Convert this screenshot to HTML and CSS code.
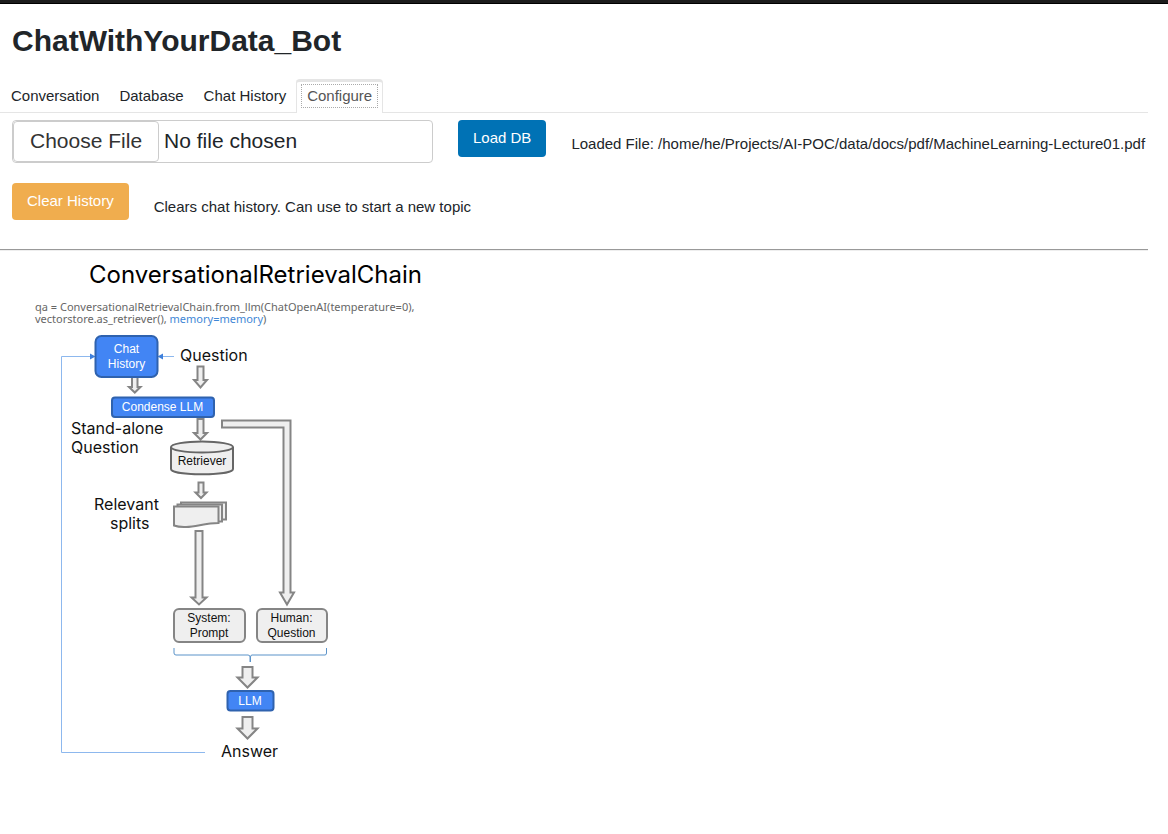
FILE: index.html
```html
<!DOCTYPE html>
<html lang="en">
<head>
<meta charset="utf-8">
<title>ChatWithYourData_Bot</title>
<link rel="stylesheet" href="styles.css">
</head>
<body>
<div class="topbar"></div>
<main class="app">
  <h1 class="title">ChatWithYourData_Bot</h1>
  <nav class="tabs" role="tablist">
    <button class="tab" type="button" role="tab">Conversation</button>
    <button class="tab" type="button" role="tab">Database</button>
    <button class="tab" type="button" role="tab">Chat History</button>
    <button class="tab tab-active" type="button" role="tab" aria-selected="true"><span class="tab-label">Configure</span></button>
  </nav>
  <section class="row row-load">
    <input class="file" type="file" aria-label="Choose File">
    <button class="btn btn-primary" type="button">Load DB</button>
    <p class="note">Loaded File: /home/he/Projects/AI-POC/data/docs/pdf/MachineLearning-Lecture01.pdf</p>
  </section>
  <section class="row">
    <button class="btn btn-warning" type="button">Clear History</button>
    <p class="note">Clears chat history. Can use to start a new topic</p>
  </section>
  <hr class="divider">
  <svg class="diagram" width="450" height="515" viewBox="0 255 450 515" role="img" aria-label="ConversationalRetrievalChain diagram">
    <text class="d-title" x="89" y="283">ConversationalRetrievalChain</text>
    <g class="d-code">
      <text x="35" y="311">qa = ConversationalRetrievalChain.from_llm(ChatOpenAI(temperature=0),</text>
      <text x="35" y="323">vectorstore.as_retriever(), <tspan class="d-memory">memory=memory</tspan>)</text>
    </g>

    <g class="d-line">
      <path d="M205 752.500H61.500V356.500H91"/>
      <path d="M174 356.500H162"/>
      <path class="d-brace" d="M174 648V653Q174 655 176 655H248Q250 655 250 657V662M250.500 662V657Q250.500 655 252 655H325Q326.500 655 326.500 653V648"/>
    </g>
    <path class="d-head" d="M90 353.500L95.500 356.500L90 359.500ZM163 353.500L157.500 356.500L163 359.500Z"/>

    <g class="d-arrow">
      <path d="M132 377H137.500V387H140.500L134.800 392.500L129 387H132Z"/>
      <path d="M197.500 366.500H203.500V380H207L200.500 387.500L194 380H197.500Z"/>
      <path d="M197.500 419H203.500V433H207L200.500 439.500L194 433H197.500Z"/>
      <path d="M198.500 482.500H203.500V492.500H206.500L201 498L195.500 492.500H198.500Z"/>
      <path d="M195.500 531H202.500V597.500H206.500L199 604.500L191.500 597.500H195.500Z"/>
      <path d="M222 420.500H290.500V592.500H294L287 604.500L280 592.500H283.500V427.500H222Z"/>
      <path d="M242.500 667H252.500V677.500H257.500L247.500 687.500L237.500 677.500H242.500Z"/>
      <path d="M242.500 717H252.500V728.500H257.500L247.500 738.500L237.500 728.500H242.500Z"/>
      <path d="M181 502.500H226V519.500H181Z"/>
      <path d="M177.500 504.500H222V521.500H177.500Z"/>
      <path d="M174 506.500H218.500V523C204 523 194 528 184 527Q178 527 174 525.500Z"/>
      <rect x="174" y="609" width="71" height="33" rx="5"/>
      <rect x="257" y="609" width="70" height="33" rx="5"/>
    </g>
    <g class="d-store">
      <path d="M171 447V469C171 476 233 476 233 469V447"/>
      <ellipse cx="202" cy="447" rx="31" ry="5.500"/>
    </g>
    <g class="d-blue">
      <rect x="95.500" y="336" width="62" height="41" rx="6"/>
      <rect x="112" y="397.500" width="102" height="19.500" rx="3"/>
      <rect x="227.500" y="691" width="46" height="19.500" rx="3"/>
    </g>

    <g class="d-small d-white">
      <text x="126.500" y="353">Chat</text>
      <text x="126.500" y="368">History</text>
      <text x="162.500" y="411">Condense LLM</text>
      <text x="250" y="705">LLM</text>
    </g>
    <g class="d-small">
      <text x="202" y="465">Retriever</text>
      <text x="209" y="622">System:</text>
      <text x="209" y="637">Prompt</text>
      <text x="291.500" y="622">Human:</text>
      <text x="291.500" y="637">Question</text>
    </g>
    <g class="d-label">
      <text x="180" y="361">Question</text>
      <text x="71" y="434">Stand-alone</text>
      <text x="71" y="453">Question</text>
      <text x="94" y="510">Relevant</text>
      <text x="110" y="529">splits</text>
      <text x="221" y="757">Answer</text>
    </g>
  </svg>
</main>
</body>
</html>
```
FILE: styles.css
```css
* { box-sizing: border-box; }
body {
  margin: 0;
  background: #fff;
  color: #212529;
  font: 15px/22px "Liberation Sans", Arial, sans-serif;
}
button, input { font: inherit; color: inherit; }
.topbar { height: 4px; background: #1c1c1c; border-bottom: 1px solid #000; }
.app { margin-right: 20px; }
.title { margin: 0; padding: 19px 12px 20px; font-size: 30px; line-height: 36px; }

.tabs { display: flex; height: 34px; padding-left: 1px; border-bottom: 1px solid #e5e5e5; }
.tab { padding: 1px 10px 0; border: 0; background: none; white-space: nowrap; }
.tab-active {
  margin-bottom: -1px;
  padding: 2px 4px 5px;
  border: 1px solid #e5e5e5;
  border-top-width: 3px;
  border-bottom: 0;
  border-radius: 4px 4px 0 0;
  background: #fff;
  color: #555;
}
.tab-label { display: block; padding: 0 5px; border: 1px dotted #aaa; }

.row { display: flex; align-items: flex-start; gap: 25px; padding: 20px 12px 0; }
.row-load { padding-top: 7px; }
.file {
  flex: none;
  width: 421px;
  height: 43px;
  border: 1px solid #ccc;
  border-radius: 4px;
  font-size: 21px;
}
.file::file-selector-button {
  height: 41px;
  margin: 0 5px 0 0;
  padding: 0 16px 2px;
  border: 1px solid #ccc;
  border-radius: 4px;
  background: #fff;
  color: #333;
  font: inherit;
}
.btn { height: 37px; padding: 0 15px 2px; border: 0; border-radius: 4px; color: #fff; white-space: nowrap; }
.btn-primary { background: #0072b5; }
.btn-warning { background: #f0ad4e; }
.note { margin: 0; padding-top: 13px; white-space: nowrap; }
.divider { margin: 29px 0 4px; border: 0; border-top: 1px solid #999; border-bottom: 1px solid #eee; }

.diagram { display: block; }
.diagram text { fill: #111; }
.diagram .d-title { font: 24px Inter, sans-serif; fill: #000; }
.diagram .d-code text { font: 11px "Noto Sans", sans-serif; fill: #666; }
.diagram .d-code .d-memory { fill: #3f87d6; }
.diagram .d-label { font: 16px Inter, sans-serif; }
.diagram .d-small { font: 12px "Liberation Sans", sans-serif; text-anchor: middle; }
.diagram .d-white text { fill: #fff; }
.d-line { fill: none; stroke: #8db8ee; }
.d-brace { stroke: #5b93c9; }
.d-head { fill: #3f80dc; }
.d-arrow { fill: #efefef; stroke: #858585; stroke-width: 2; }
.d-store { fill: #efefef; stroke: #666; stroke-width: 2; }
.d-blue { fill: #4285f4; stroke: #2f62ae; stroke-width: 2; }
```
